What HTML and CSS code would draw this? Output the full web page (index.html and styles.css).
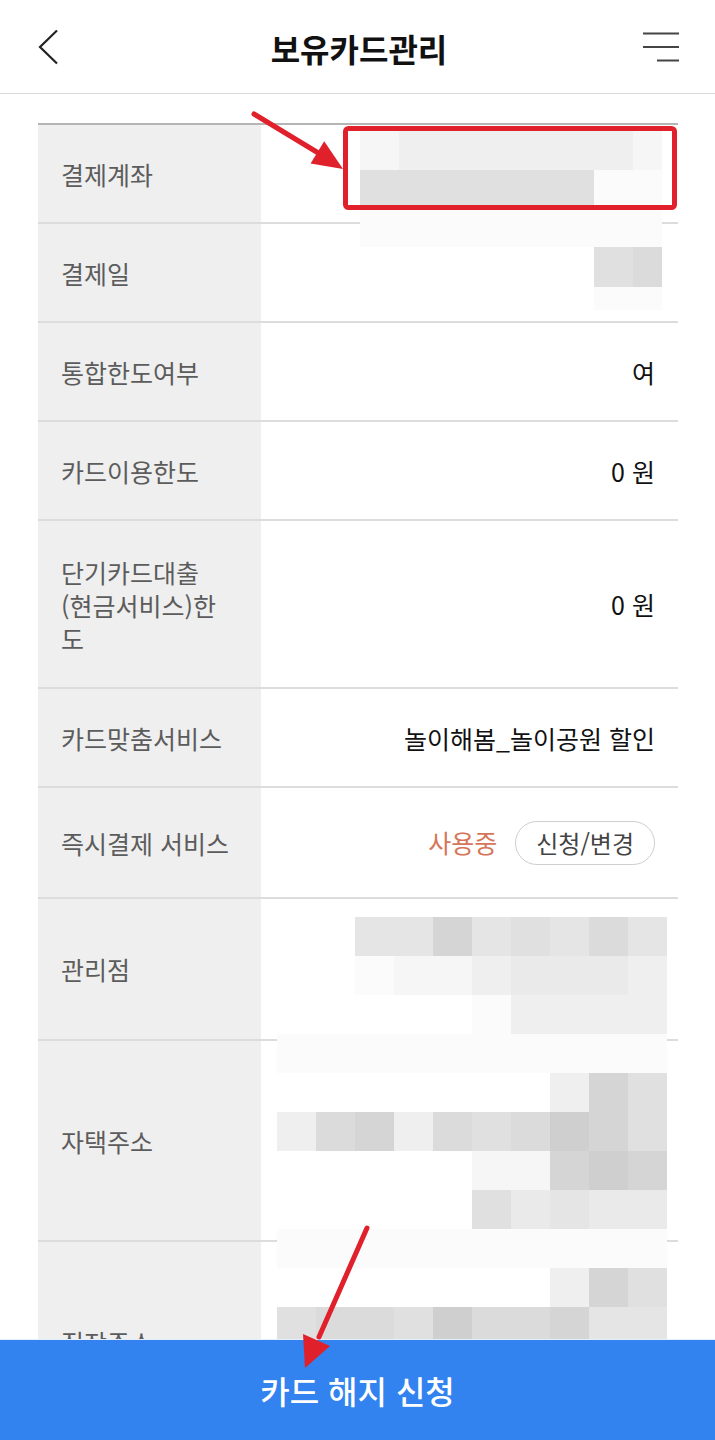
FILE: index.html
```html
<!DOCTYPE html>
<html lang="ko">
<head>
<meta charset="utf-8">
<title>보유카드관리</title>
<link rel="stylesheet" href="styles.css">
</head>
<body>
<header class="topbar">
  <button class="icon-btn back" aria-label="뒤로">
    <svg width="20" height="36" viewBox="0 0 20 36"><polyline points="19,1.5 2,18 19,34.5" fill="none" stroke="#222" stroke-width="2.2" stroke-linejoin="miter"/></svg>
  </button>
  <h1 class="title">보유카드관리</h1>
  <button class="icon-btn menu" aria-label="메뉴">
    <svg width="38" height="30" viewBox="0 0 38 30"><line x1="1" y1="1.5" x2="37" y2="1.5" stroke="#444" stroke-width="2"/><line x1="1" y1="15" x2="37" y2="15" stroke="#444" stroke-width="2"/><line x1="15" y1="28.5" x2="37" y2="28.5" stroke="#444" stroke-width="2"/></svg>
  </button>
</header>

<main class="content">
  <div class="info-table">
    <div class="row h97"><div class="label">결제계좌</div><div class="value"></div></div>
    <div class="row h97"><div class="label">결제일</div><div class="value"></div></div>
    <div class="row h97"><div class="label">통합한도여부</div><div class="value">여</div></div>
    <div class="row h97"><div class="label">카드이용한도</div><div class="value">0 원</div></div>
    <div class="row h166"><div class="label multi">단기카드대출<br>(현금서비스)한<br>도</div><div class="value">0 원</div></div>
    <div class="row h97"><div class="label">카드맞춤서비스</div><div class="value">놀이해봄_놀이공원 할인</div></div>
    <div class="row h109"><div class="label">즉시결제 서비스</div><div class="value"><span class="status">사용중</span><button class="pill">신청/변경</button></div></div>
    <div class="row h140"><div class="label">관리점</div><div class="value"></div></div>
    <div class="row h199"><div class="label">자택주소</div><div class="value"></div></div>
    <div class="row h199"><div class="label">직장주소</div><div class="value"></div></div>
  </div>
</main>

<div class="mosaic mosaic-account">
  <i class="s1"></i><i class="s2"></i><i class="s2"></i><i class="s2"></i><i class="s2"></i><i class="s2"></i><i class="s2"></i><i class="s1"></i>
  <i class="s5"></i><i class="s5"></i><i class="s5"></i><i class="s5"></i><i class="s5"></i><i class="s5"></i><i class="s0"></i><i class="s0"></i>
  <i class="s0"></i><i class="s0"></i><i class="s0"></i><i class="s0"></i><i class="s0"></i><i class="s0"></i><i class="s0"></i><i class="s0"></i>
  <i></i><i></i><i></i><i></i><i></i><i></i><i class="s5"></i><i class="s6"></i>
  <i></i><i></i><i></i><i></i><i></i><i></i><i class="s0"></i><i class="s0"></i>
</div>

<div class="mosaic mosaic-address">
  <i></i><i></i><i class="s4"></i><i class="s4"></i><i class="s7"></i><i class="s4"></i><i class="s5"></i><i class="s4"></i><i class="s6"></i><i class="s4"></i>
  <i></i><i></i><i class="s0"></i><i class="s1"></i><i class="s1"></i><i class="s2"></i><i class="s3"></i><i class="s3"></i><i class="s3"></i><i class="s2"></i>
  <i></i><i></i><i></i><i></i><i></i><i class="s0"></i><i class="s2"></i><i class="s2"></i><i class="s2"></i><i class="s2"></i>
  <i class="s0"></i><i class="s0"></i><i class="s0"></i><i class="s0"></i><i class="s0"></i><i class="s0"></i><i class="s0"></i><i class="s0"></i><i class="s0"></i><i class="s0"></i>
  <i></i><i></i><i></i><i></i><i></i><i></i><i></i><i class="s2"></i><i class="s7"></i><i class="s5"></i>
  <i class="s2"></i><i class="s6"></i><i class="s7"></i><i class="s2"></i><i class="s6"></i><i class="s5"></i><i class="s6"></i><i class="s8"></i><i class="s7"></i><i class="s5"></i>
  <i></i><i></i><i></i><i></i><i></i><i class="s1"></i><i class="s1"></i><i class="s7"></i><i class="s8"></i><i class="s7"></i>
  <i></i><i></i><i></i><i></i><i></i><i class="s5"></i><i class="s3"></i><i class="s4"></i><i class="s3"></i><i class="s3"></i>
  <i class="s0"></i><i class="s0"></i><i class="s0"></i><i class="s0"></i><i class="s0"></i><i class="s0"></i><i class="s0"></i><i class="s0"></i><i class="s0"></i><i class="s0"></i>
  <i></i><i></i><i></i><i></i><i></i><i></i><i></i><i class="s2"></i><i class="s7"></i><i class="s5"></i>
  <i class="s5"></i><i class="s6"></i><i class="s6"></i><i class="s5"></i><i class="s8"></i><i class="s6"></i><i class="s6"></i><i class="s7"></i><i class="s4"></i><i class="s4"></i>
</div>

<footer class="cta">카드 해지 신청</footer>

<svg class="annotations" width="715" height="1440" viewBox="0 0 715 1440">
  <rect x="345.5" y="128.5" width="329" height="79" rx="3" fill="none" stroke="#e0202a" stroke-width="5"/>
  <line x1="254" y1="114" x2="320" y2="154" stroke="#e0202a" stroke-width="5" stroke-linecap="round"/>
  <polygon points="343,169 310.6,163.5 324.2,141.3" fill="#e0202a"/>
  <line x1="367" y1="1228" x2="319" y2="1337" stroke="#e0202a" stroke-width="5" stroke-linecap="round"/>
  <polygon points="305,1368 303,1334 330,1346" fill="#e0202a"/>
</svg>
</body>
</html>
```

FILE: styles.css
```css
* { box-sizing: border-box; }

html, body {
  margin: 0;
  padding: 0;
  background: #fff;
}

body {
  width: 715px;
  font-family: "Noto Sans CJK KR", "Noto Sans", sans-serif;
  color: #111;
}

.topbar {
  height: 94px;
  border-bottom: 1px solid #dcdcdc;
  display: grid;
  grid-template-columns: 1fr auto 1fr;
  align-items: center;
  padding: 0 35px 0 38px;
}

.icon-btn {
  background: none;
  border: 0;
  padding: 0;
  margin: 0;
  display: flex;
}

.back { justify-self: start; }
.menu { justify-self: end; }

.title {
  margin: 0;
  font-size: 32px;
  font-weight: 700;
  color: #111;
  letter-spacing: 0;
  line-height: 1;
  padding-top: 2px;
}

.content {
  padding: 29px 37px 100px 38px;
}

.info-table {
  border-top: 2px solid #b5b5b5;
}

.row {
  display: grid;
  grid-template-columns: 223px 1fr;
  border-bottom: 2px solid #dcdcdc;
}

.h97 { height: 99px; }
.h109 { height: 111px; }
.h140 { height: 142px; }
.h166 { height: 168px; }
.h199 { height: 201px; }

.label {
  background: #efefef;
  display: flex;
  align-items: center;
  padding: 0 8px 0 23px;
  font-size: 25px;
  color: #5c5c5c;
  white-space: nowrap;
  line-height: 1.2;
}

.label.multi {
  line-height: 33px;
  padding-top: 2px;
}

.value {
  display: flex;
  align-items: center;
  justify-content: flex-end;
  padding-right: 23px;
  font-size: 25px;
  color: #111;
  white-space: nowrap;
}

.status {
  color: #d5765a;
  margin-right: 18px;
  font-size: 25px;
  padding-bottom: 2px;
}

.pill {
  font-family: inherit;
  height: 44px;
  padding: 0 20px;
  border: 1px solid #cfcfcf;
  border-radius: 22px;
  background: #fff;
  font-size: 24px;
  color: #444;
  display: flex;
  align-items: center;
}

.mosaic {
  position: absolute;
  display: grid;
  pointer-events: none;
}

.mosaic i { display: block; }

.mosaic-account {
  left: 360px;
  top: 131px;
  grid-template-columns: repeat(7, 39px) 29px;
  grid-template-rows: 39px 38px 39px 40px 23px;
}

.mosaic-address {
  left: 277px;
  top: 917px;
  grid-template-columns: repeat(10, 39px);
  grid-template-rows: repeat(11, 39px);
}

.s0 { background: #fbfbfb; }
.s1 { background: #f6f6f6; }
.s2 { background: #efefef; }
.s3 { background: #eaeaea; }
.s4 { background: #e5e5e5; }
.s5 { background: #e0e0e0; }
.s6 { background: #dbdbdb; }
.s7 { background: #d5d5d5; }
.s8 { background: #cfcfcf; }

.cta {
  position: fixed;
  left: 0;
  right: 0;
  bottom: 0;
  height: 101px;
  border-top: 1px solid #e6eefb;
  background: #3282f0;
  color: #fff;
  font-size: 32px;
  font-weight: 500;
  display: flex;
  align-items: center;
  justify-content: center;
  z-index: 5;
}

.annotations {
  position: absolute;
  left: 0;
  top: 0;
  z-index: 10;
  pointer-events: none;
}
```
